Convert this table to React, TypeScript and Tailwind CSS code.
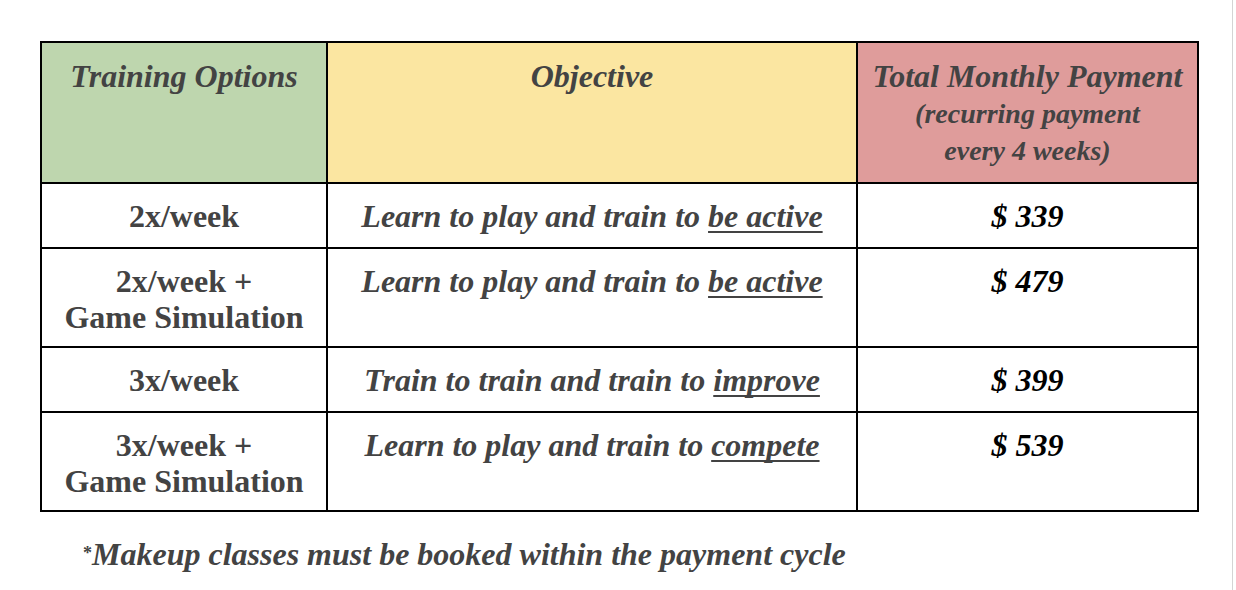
import React from "react";

const serif = { fontFamily: '"Liberation Serif", "Times New Roman", serif' };

type Row = {
  option: string[];
  lead: string;
  goal: string;
  price: string;
};

const ROWS: Row[] = [
  { option: ["2x/week"], lead: "Learn to play and train to ", goal: "be active", price: "$ 339" },
  { option: ["2x/week +", "Game Simulation"], lead: "Learn to play and train to ", goal: "be active", price: "$ 479" },
  { option: ["3x/week"], lead: "Train to train and train to ", goal: "improve", price: "$ 399" },
  { option: ["3x/week +", "Game Simulation"], lead: "Learn to play and train to ", goal: "compete", price: "$ 539" },
];

export default function App() {
  return (
    <div className="flex h-[590px] w-[1236px] bg-white text-[#434343]" style={serif}>
      <div className="w-[1233px] border-r border-[#d4d4d4] pl-[40px] pt-[41px]">
        <table className="w-[1157px] table-fixed border-collapse border-2 border-black">
          <colgroup>
            <col className="w-[286px]" />
            <col className="w-[530px]" />
            <col className="w-[341px]" />
          </colgroup>
          <thead>
            <tr className="h-[141px] align-top text-center font-bold italic">
              <th className="border-2 border-black bg-[#bed6ae] pt-[15px] text-[32px] leading-[37px]">
                Training Options
              </th>
              <th className="border-2 border-black bg-[#fbe6a1] pt-[15px] text-[32px] leading-[37px]">
                Objective
              </th>
              <th className="border-2 border-black bg-[#df9c9b] pt-[15px]">
                <div className="text-[32px] leading-[37px]">Total Monthly Payment</div>
                <div className="text-[28px] leading-[38px]">(recurring payment</div>
                <div className="text-[28px] leading-[36px]">every 4 weeks)</div>
              </th>
            </tr>
          </thead>
          <tbody>
            {ROWS.map((r) => (
              <tr key={r.price} className="h-[65px] align-top text-center">
                <td className="border-2 border-black pt-[14px] pb-[11px] text-[32px] font-bold leading-[36px]">
                  {r.option.map((l) => (
                    <div key={l}>{l}</div>
                  ))}
                </td>
                <td className="border-2 border-black pt-[14px] text-[32px] font-bold italic leading-[36px]">
                  {r.lead}
                  <span className="underline decoration-2 underline-offset-[4px] [text-decoration-skip-ink:none]">
                    {r.goal}
                  </span>
                </td>
                <td className="border-2 border-black pt-[14px] text-[32px] font-bold italic leading-[36px] text-black">
                  {r.price}
                </td>
              </tr>
            ))}
          </tbody>
        </table>
        <p className="mt-[24px] flex items-start pl-[43px] font-bold italic">
          <span className="mt-[8px] text-[18px] leading-[18px] not-italic">*</span>
          <span className="text-[32px] leading-[36px]">
            Makeup classes must be booked within the payment cycle
          </span>
        </p>
      </div>
    </div>
  );
}
